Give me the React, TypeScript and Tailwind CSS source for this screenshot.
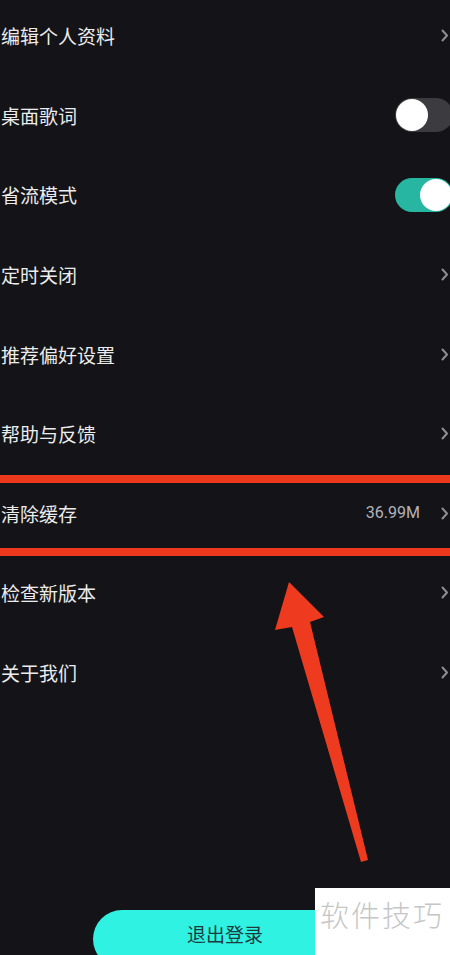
import React from 'react';

type Row = { label: string; kind: 'link' | 'off' | 'on'; value?: string };

const rows: Row[] = [
  { label: '编辑个人资料', kind: 'link' },
  { label: '桌面歌词', kind: 'off' },
  { label: '省流模式', kind: 'on' },
  { label: '定时关闭', kind: 'link' },
  { label: '推荐偏好设置', kind: 'link' },
  { label: '帮助与反馈', kind: 'link' },
  { label: '清除缓存', kind: 'link', value: '36.99M' },
  { label: '检查新版本', kind: 'link' },
  { label: '关于我们', kind: 'link' },
];

const Chevron = () => (
  <svg width="8" height="13" viewBox="0 0 8 13" className="shrink-0">
    <path d="M1.5 1.5 L6 6.5 L1.5 11.5" fill="none" stroke="#8e8e93" strokeWidth="2" strokeLinecap="round" strokeLinejoin="round" />
  </svg>
);

const Toggle = ({ on }: { on: boolean }) => (
  <div
    className={`relative w-[58px] h-[34px] rounded-full shrink-0 -mr-[4px] ${on ? 'bg-[#27b6a2]' : 'bg-[#3b3b40]'}`}
  >
    <div
      className={`absolute top-[1px] w-[32px] h-[32px] rounded-full bg-white ${on ? 'left-[25px]' : 'left-[1px]'}`}
    />
  </div>
);

export default function App() {
  return (
    <div
      className="relative w-[450px] h-[955px] overflow-hidden bg-[#131318] text-[#ececec]"
      style={{ fontFamily: '"Noto Sans CJK SC", "Noto Sans", sans-serif' }}
    >
      <div className="flex flex-col mt-[-4px]">
        {rows.map((r) => (
          <div key={r.label} className="h-[79.6px] flex items-center justify-between pl-[1px] pr-[1px]">
            <span className="text-[19px] leading-none">{r.label}</span>
            {r.kind === 'link' ? (
              <div className="flex items-center gap-[21px]">
                {r.value && <span className="text-[16px] text-[#b4b4b8]" style={{ fontFamily: 'Roboto, sans-serif' }}>{r.value}</span>}
                <Chevron />
              </div>
            ) : (
              <Toggle on={r.kind === 'on'} />
            )}
          </div>
        ))}
      </div>

      <div className="mt-[198px] ml-[93px] w-[264px] h-[58px] rounded-full bg-[#30f2e2] flex items-start justify-center pt-[14px]">
        <span className="text-[19px] leading-none text-[#1d3b3c]">退出登录</span>
      </div>

      {/* annotations */}
      <div className="absolute left-0 right-0 top-[475px] h-[8px] bg-[#ec391d]" />
      <div className="absolute left-0 right-0 top-[548px] h-[8px] bg-[#ec391d]" />
      <svg className="absolute left-0 top-0" width="450" height="955" viewBox="0 0 450 955">
        <polygon points="289,582 324,617 310,622 368,860 361,862 292,627 275,630" fill="#ee3b1f" />
      </svg>

      <div className="absolute left-[315px] top-[888px] w-[135px] h-[67px] bg-white flex items-start pl-[5px] pt-[12px]">
        <span className="text-[29px] leading-none tracking-[2px] text-[#c6c6c6] font-light">软件技巧</span>
      </div>
    </div>
  );
}
